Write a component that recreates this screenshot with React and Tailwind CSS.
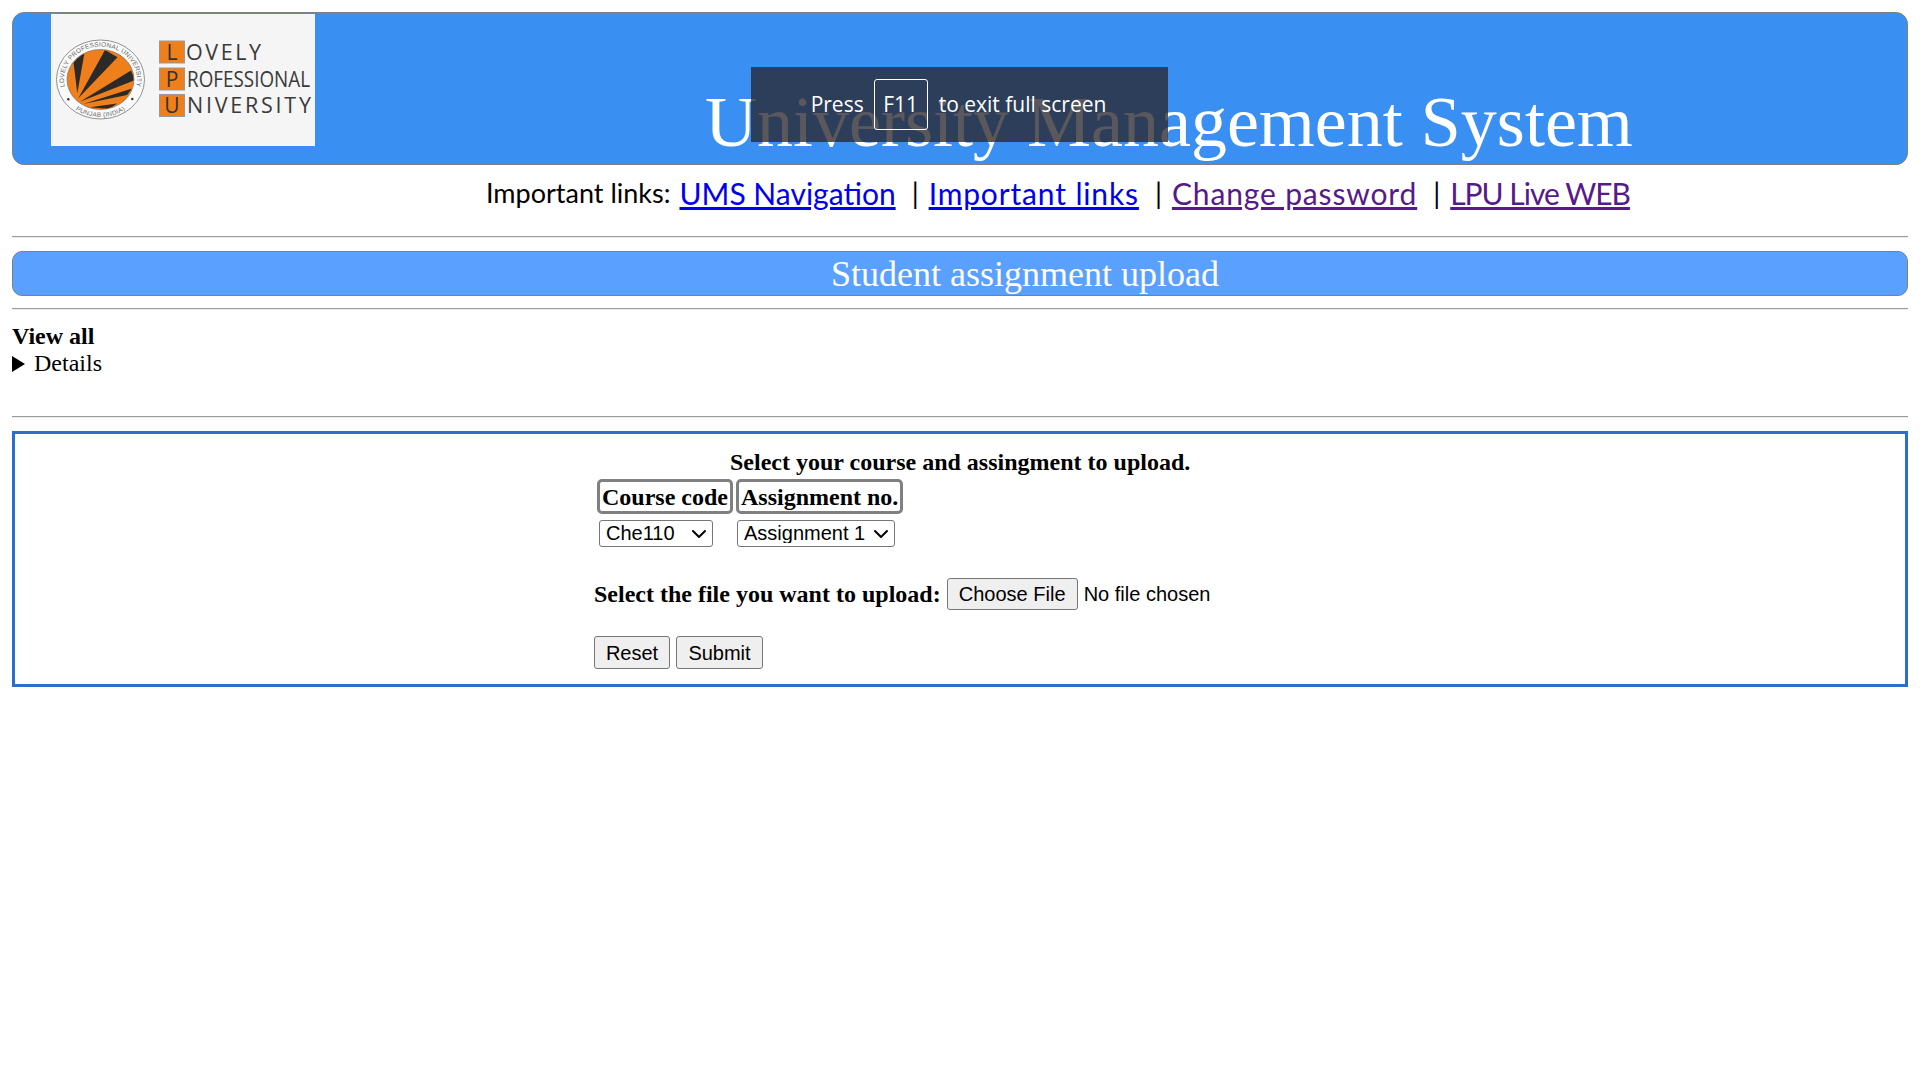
import React from 'react';
import { ChevronDown } from 'lucide-react';

const serif = 'font-["Liberation_Serif","Times_New_Roman",serif]';

// px coords are relative to the logo box (264x132)
const LpuLogo = () => (
  <svg width="264" height="132" viewBox="0 0 264 132" className="block bg-[#f5f5f5]">
    <defs>
      <clipPath id="seal">
        <ellipse cx="49.5" cy="65.5" rx="33" ry="29.5" />
      </clipPath>
      <path id="sealTop" d="M 13.7 72 A 36.5 33 0 1 1 85.3 72" fill="none" />
      <path id="sealBottom" d="M 12.7 83.5 A 42 37.5 0 0 0 86.3 83.5" fill="none" />
    </defs>
    <ellipse cx="49.5" cy="65.5" rx="44" ry="39.5" fill="#fafafa" stroke="#777" strokeWidth="0.8" />
    <ellipse cx="49.5" cy="65.5" rx="33.5" ry="30" fill="#ef7f1a" stroke="#666" strokeWidth="0.6" />
    <g clipPath="url(#seal)" fill="#2b2a29">
      <path d="M26.3 79.3 L22 44.3 L34 36 Z" />
      <path d="M27.3 84.3 L54 36 L66.5 43.3 Z" />
      <path d="M29 87.7 L80 56.5 L84 66 Z" />
      <path d="M32.3 90 L81 74.5 L76 81 Z" />
      <path d="M39 93.3 L66 89.5 L58 95 Z" />
    </g>
    <text fontFamily="Liberation Sans, sans-serif" fontSize="6.4" fill="#666" letterSpacing="0.25">
      <textPath href="#sealTop" startOffset="50%" textAnchor="middle">LOVELY PROFESSIONAL UNIVERSITY</textPath>
    </text>
    <text fontFamily="Liberation Sans, sans-serif" fontSize="6.4" fill="#666" letterSpacing="0.3">
      <textPath href="#sealBottom" startOffset="50%" textAnchor="middle">PUNJAB (INDIA)</textPath>
    </text>
    <circle cx="17.3" cy="85.3" r="1.2" fill="#333" />
    <circle cx="81.3" cy="85" r="1.2" fill="#333" />
    {[['L', 27], ['P', 54], ['U', 80.5]].map(([letter, top]) => (
      <g key={letter}>
        <rect x="108.5" y={top} width="25" height="22" fill="#ef7f1a" stroke="#999" strokeWidth="1" />
        <text x="121" y={top + 18.5} textAnchor="middle" fontFamily="Open Sans, sans-serif" fontSize="21" fill="#333">{letter}</text>
      </g>
    ))}
    <g fontFamily="Open Sans, sans-serif" fontSize="21.5" fill="#3a3a3a">
      <text x="135" y="46" textLength="75" lengthAdjust="spacing">OVELY</text>
      <text x="136" y="73" textLength="123" lengthAdjust="spacingAndGlyphs">ROFESSIONAL</text>
      <text x="136" y="99" textLength="124" lengthAdjust="spacing">NIVERSITY</text>
    </g>
  </svg>
);

const Rule = ({ className }) => (
  <hr className={`h-0 border-t border-b border-t-[#999999] border-b-[#eeeeee] ${className}`} />
);

const Separator = () => <span className="ml-[16px] mr-[10px] text-[28px]">|</span>;

const App = () => {
  return (
    <div className={`relative min-h-[1080px] bg-white px-3 pt-3 text-black ${serif}`}>
      <header className="flex h-[153px] rounded-[12px] border border-[#808080] bg-[#3a8ff3]">
        <div className="ml-[38px] mt-[1px]">
          <LpuLogo />
        </div>
        <h1 className="ml-[390px] mt-[69px] text-[72px] leading-[80px] text-white whitespace-nowrap">
          University Management System
        </h1>
      </header>

      <nav className='mt-[6px] flex h-[52px] pl-[474px] font-["Lato",sans-serif] leading-[44px]'>
        <span className="text-[27px]">Important links:</span>
        <a href="#" className="ml-[9px] text-[30px] text-[#0000ee] underline">UMS Navigation</a>
        <Separator />
        <a href="#" className="text-[30px] tracking-[0.85px] text-[#0000ee] underline">Important links</a>
        <Separator />
        <a href="#" className="text-[30px] tracking-[0.85px] text-[#551a8b] underline">Change password</a>
        <Separator />
        <a href="#" className="text-[30px] tracking-[-1px] text-[#551a8b] underline">LPU Live WEB</a>
      </nav>

      <Rule className="mt-[13px]" />
      <div className="mt-[13px] flex h-[45px] items-center justify-center rounded-[10px] border border-[#808080] bg-[#5aa0ff] pl-[130px] text-[36px] text-white">
        Student assignment upload
      </div>
      <Rule className="mt-[12px]" />

      <div className="mt-[13px] text-[24px] leading-[27px]">
        <p className="font-bold">View all</p>
        <div className="flex items-center gap-[9px]">
          <span className="h-0 w-0 border-y-[8px] border-l-[13px] border-y-transparent border-l-black" />
          <span>Details</span>
        </div>
      </div>

      <Rule className="mt-[39px]" />

      <main className="mt-[13px] h-[256px] border-[3px] border-[#2b6fce] pt-[15px]">
        <p className="pl-[715px] text-[24px] font-bold leading-[26px]">Select your course and assingment to upload.</p>
        <div className="ml-[582px] mt-[4px] flex gap-[3px] text-[24px] font-bold leading-[28px]">
          <div className="flex h-[35px] items-center rounded-[5px] border-[3px] border-[#808080] px-[2px]">Course code</div>
          <div className="flex h-[35px] items-center rounded-[5px] border-[3px] border-[#808080] px-[2px]">Assignment no.</div>
        </div>
        <div className='ml-[584px] mt-[6px] flex gap-[24px] font-["Liberation_Sans",Arial,sans-serif] text-[20px] leading-[20px]'>
          <div className="relative">
            <select className="block h-[27px] w-[114px] appearance-none rounded-[3px] border border-[#767676] bg-white pb-[2px] pl-[6px]">
              <option>Che110</option>
            </select>
            <ChevronDown size={24} strokeWidth={2} className="pointer-events-none absolute right-[2px] top-[1.5px]" />
          </div>
          <div className="relative">
            <select className="block h-[27px] w-[158px] appearance-none rounded-[3px] border border-[#767676] bg-white pb-[2px] pl-[6px]">
              <option>Assignment 1</option>
            </select>
            <ChevronDown size={24} strokeWidth={2} className="pointer-events-none absolute right-[2px] top-[1.5px]" />
          </div>
        </div>
        <div className="ml-[579px] mt-[31px] flex h-[32px] items-center text-[24px] font-bold">
          <span>Select the file you want to upload:</span>
          <span className='ml-[6px] flex items-center font-["Liberation_Sans",Arial,sans-serif] text-[20px] font-normal'>
            <button type="button" className="h-[32px] w-[131px] rounded-[3px] border border-[#767676] bg-[#efefef]">Choose File</button>
            <span className="ml-[6px]">No file chosen</span>
          </span>
        </div>
        <div className='ml-[579px] mt-[26px] flex gap-[6px] font-["Liberation_Sans",Arial,sans-serif] text-[20px]'>
          <button type="button" className="h-[33px] w-[76px] rounded-[3px] border border-[#767676] bg-[#efefef]">Reset</button>
          <button type="button" className="h-[33px] w-[87px] rounded-[3px] border border-[#767676] bg-[#efefef]">Submit</button>
        </div>
      </main>

      {/* browser's fullscreen notice, sits over the header */}
      <div className='absolute left-[751px] top-[67px] flex h-[75px] w-[417px] items-center justify-center gap-[10px] bg-[#28262c]/77 pr-[2px] font-["Open_Sans",sans-serif] text-[21px] text-white'>
        <span>Press</span>
        <span className="flex h-[51px] w-[54px] items-center justify-center rounded-[3px] border border-white">F11</span>
        <span className="ml-[1px]">to exit full screen</span>
      </div>
    </div>
  );
};

export default App;
